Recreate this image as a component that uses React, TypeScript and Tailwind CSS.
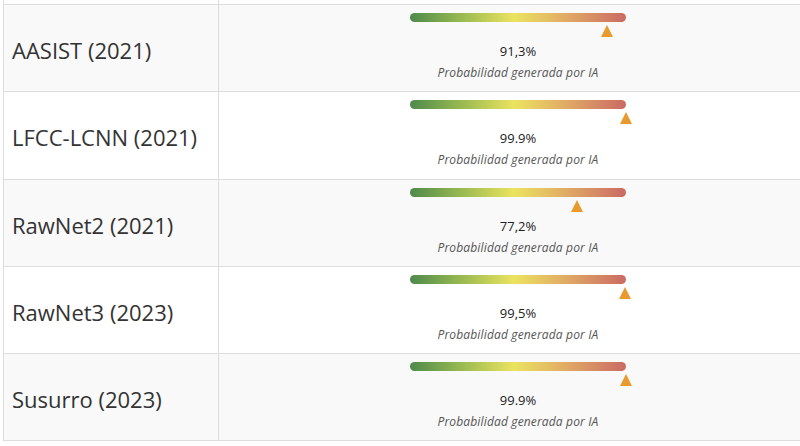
import React from 'react';

type ModelRow = {
    name: string;
    value: number;
    label: string;
    height: string;
};

const rows: ModelRow[] = [
    { name: 'AASIST (2021)', value: 91.3, label: '91,3%', height: 'h-[87px]' },
    { name: 'LFCC-LCNN (2021)', value: 99.9, label: '99.9%', height: 'h-[88px]' },
    { name: 'RawNet2 (2021)', value: 77.2, label: '77,2%', height: 'h-[87px]' },
    { name: 'RawNet3 (2023)', value: 99.5, label: '99,5%', height: 'h-[87px]' },
    { name: 'Susurro (2023)', value: 99.9, label: '99.9%', height: 'h-[87px]' },
];

const ProbabilityBar: React.FC<{ value: number; label: string }> = ({ value, label }) => (
    <div className="flex flex-col items-center pt-[8px]">
        <div className="relative w-[216px]">
            <div className="h-[9px] w-full rounded-full bg-[linear-gradient(to_right,#4f8a4b_0%,#9cbc52_25%,#ebe360_48%,#e2b065_70%,#cb6a64_100%)]" />
            <div
                className="absolute top-[12px] h-0 w-0 -translate-x-1/2 border-x-[6.5px] border-b-[12px] border-x-transparent border-b-[#e89a2e]"
                style={{ left: `${value}%` }}
            />
        </div>
        <div className="mt-[20px] text-[13px] leading-[18px] text-[#222]">{label}</div>
        <div className="mt-[5px] text-[12px] italic leading-[15px] tracking-[0.15px] text-[#555]">Probabilidad generada por IA</div>
    </div>
);

export default function App() {
    return (
        <div className="h-[446px] w-[800px] overflow-hidden bg-white font-['Open_Sans',sans-serif]">
            <div className="ml-[3px] w-[814px]">
                <div className="grid h-[5px] grid-cols-[216px_1fr] border-b border-[#dddddd]">
                    <div className="border-x border-[#dddddd]" />
                    <div />
                </div>
                {rows.map((row, i) => (
                    <div
                        key={row.name}
                        className={`grid grid-cols-[216px_1fr] border-b border-[#dddddd] ${row.height} ${i % 2 === 0 ? 'bg-[#f9f9f9]' : 'bg-white'}`}
                    >
                        <div className="flex items-center border-x border-[#dddddd] pl-[8px] pt-[4px] text-[22px] text-[#333]">
                            {row.name}
                        </div>
                        <ProbabilityBar value={row.value} label={row.label} />
                    </div>
                ))}
            </div>
        </div>
    );
}
